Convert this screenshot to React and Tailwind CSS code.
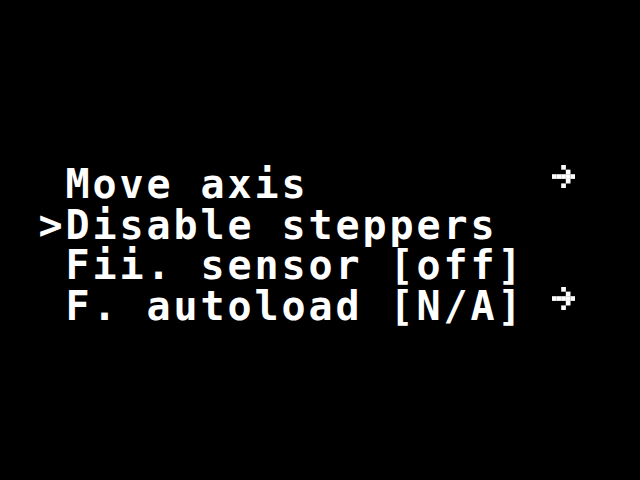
import React from "react";

// 20x4 character LCD menu
const rows = [
  { text: " Move axis", arrow: true },
  { text: ">Disable steppers", arrow: false },
  { text: " Fii. sensor [off]", arrow: false },
  { text: " F. autoload [N/A]", arrow: true },
];

function Arrow() {
  // 5x5 pixel arrow like the HD44780 custom char
  const px = [
    [2, 0],
    [3, 1],
    [0, 2], [1, 2], [2, 2], [3, 2], [4, 2],
    [3, 3],
    [2, 4],
  ];
  return (
    <svg width="23" height="23" viewBox="0 0 5 5" className="block">
      {px.map(([x, y], i) => (
        <rect key={i} x={x} y={y} width="1.02" height="1.02" fill="#fff" />
      ))}
    </svg>
  );
}

function LcdRow({ text, arrow }) {
  const cells = text.padEnd(19, " ").split("");
  return (
    <div className="grid grid-cols-[repeat(20,27px)] h-[40.7px]">
      {cells.map((c, i) => (
        <div key={i} className="flex justify-center leading-[40.7px]">
          {c === " " ? "\u00a0" : c}
        </div>
      ))}
      <div className="flex justify-center items-start pt-[1px]">
        {arrow && <Arrow />}
      </div>
    </div>
  );
}

export default function App() {
  return (
    <div className="w-[640px] h-[480px] bg-black text-white overflow-hidden">
      <div
        className="pt-[164px] pl-[37px] text-[40px] font-bold"
        style={{ fontFamily: '"DejaVu Sans Mono", "Liberation Mono", monospace' }}
      >
        {rows.map((r, i) => (
          <LcdRow key={i} text={r.text} arrow={r.arrow} />
        ))}
      </div>
    </div>
  );
}
